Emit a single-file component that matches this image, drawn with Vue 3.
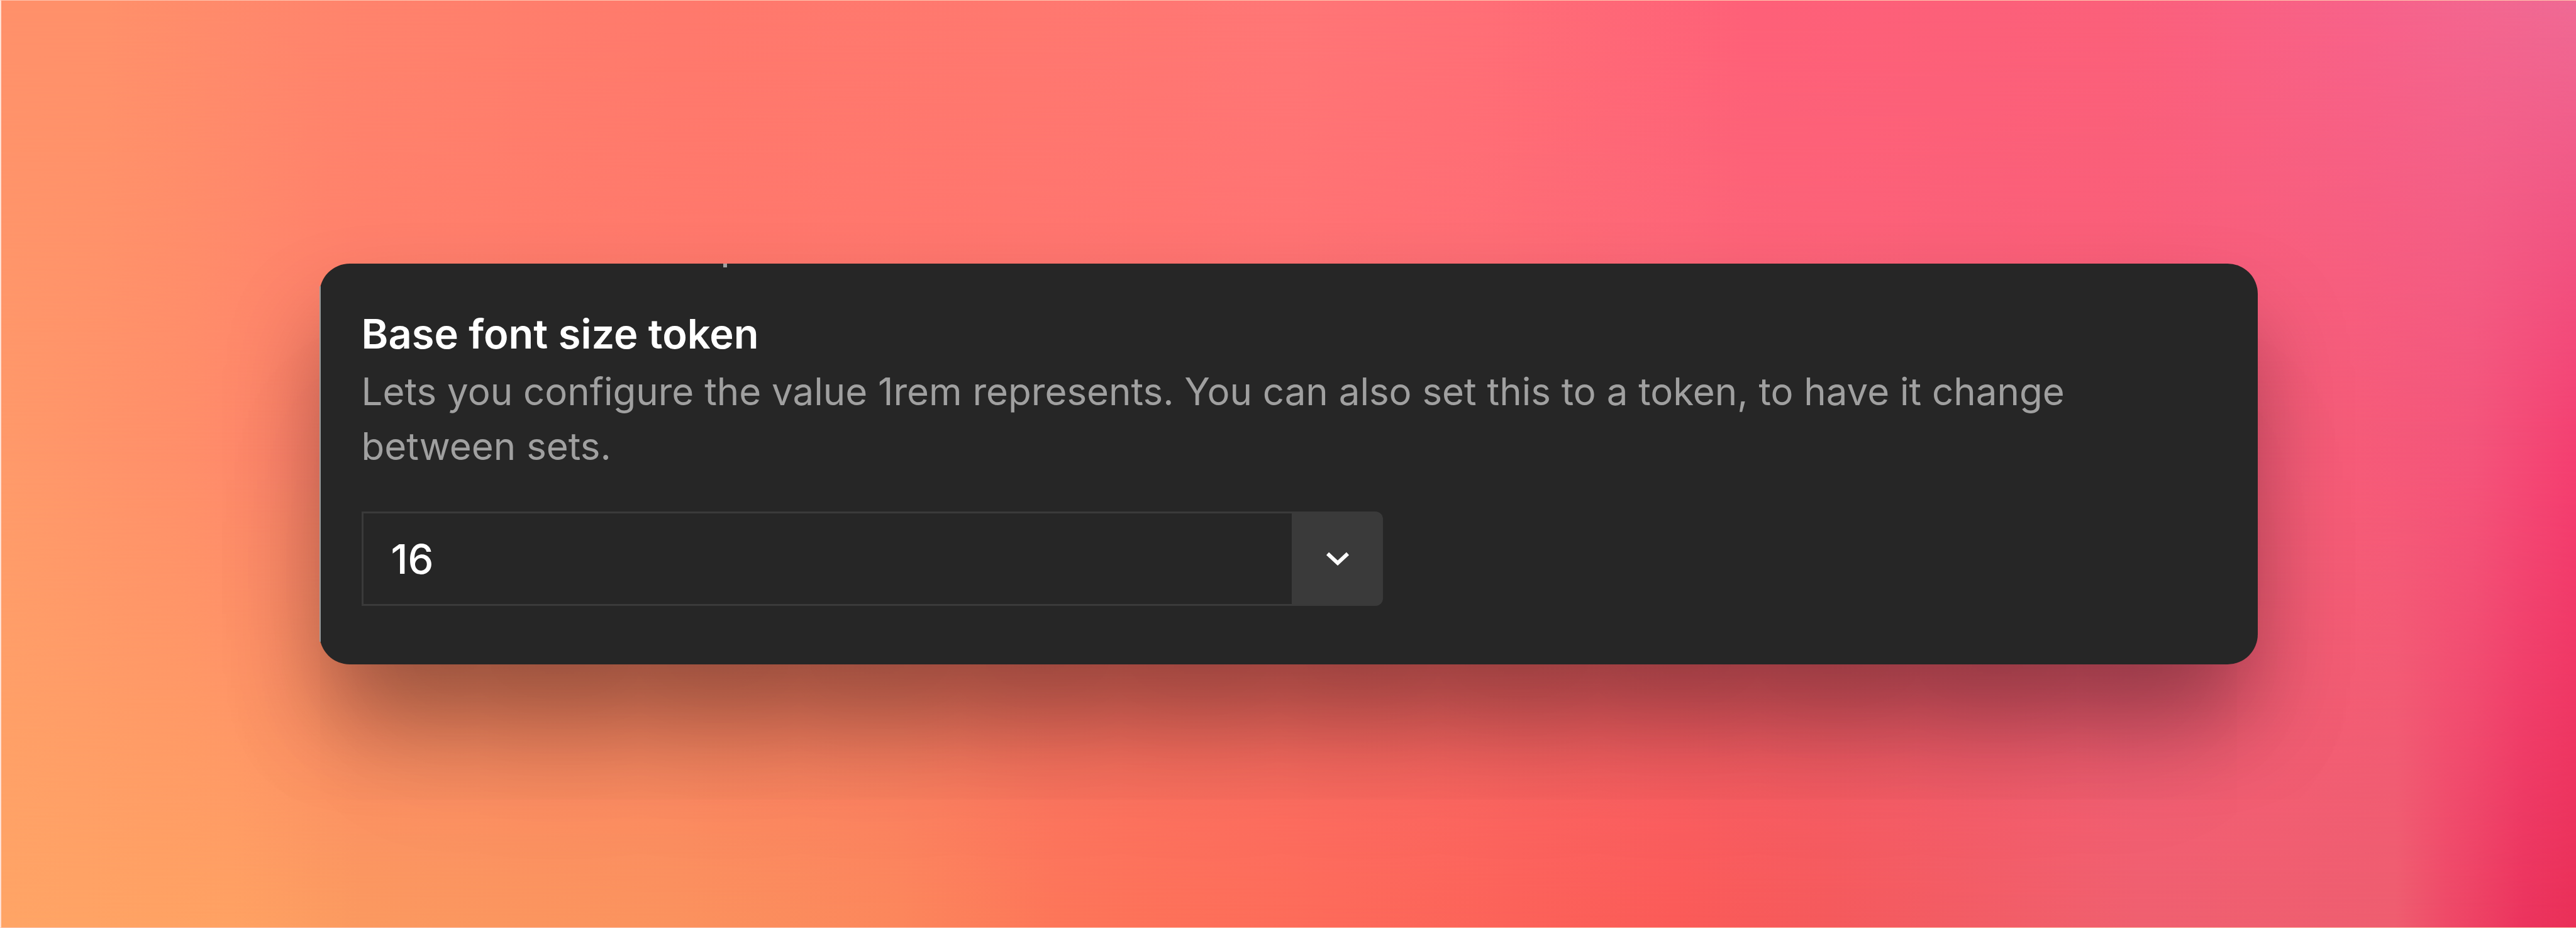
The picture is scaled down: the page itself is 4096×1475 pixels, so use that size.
<script setup>
import { ref } from 'vue'

const baseFontSize = ref('16')
</script>

<template>
  <main class="page">
    <div class="wash wash-bottom"></div>
    <div class="wash wash-middle"></div>
    <div class="wash wash-top"></div>
    <section class="card">
      <label class="title" for="base-font-size">Base font size token</label>
      <p id="base-font-hint" class="hint">
        Lets you configure the value 1rem represents. You can also set this to a token, to have it change between sets.
      </p>
      <div class="field">
        <input id="base-font-size" v-model="baseFontSize" class="value" type="text" aria-describedby="base-font-hint" />
        <button class="toggle" type="button" aria-label="Choose a token">
          <svg class="chevron" viewBox="0 0 40 24" fill="none" aria-hidden="true">
            <path d="M4 4 L20 19 L36 4" stroke="currentColor" stroke-width="6" />
          </svg>
        </button>
      </div>
    </section>
  </main>
</template>

<style>
body {
  margin: 0;
}
</style>

<style scoped>
.page {
  position: relative;
  isolation: isolate;
  box-sizing: border-box;
  min-height: 100vh;
  display: flex;
  align-items: center;
  justify-content: center;
  overflow: hidden;
  border: 1px solid #ffc4ae;
  border-width: 1px 0 1px 2px;
  border-left-color: #ffe0d4;
  font-family: Inter, "Liberation Sans", sans-serif;
}

.wash {
  position: absolute;
  inset: 0;
  z-index: -1;
}

.wash-bottom {
  background: linear-gradient(to right, #ffa566 0%, #ffa263 9%, #fb9a60 14%, #fb935e 26%, #fc875c 35%, #fd7659 41%, #fd6a5a 52%, #fb5b58 65%, #f55a5c 71%, #f06070 83%, #ef5e70 93%, #ef4a68 95%, #ec345e 98%, #ea3058 100%);
}

.wash-middle {
  background: linear-gradient(to right, #ff9a6a 0%, #ff8f6a 7%, #ff7e6b 14%, #ff776c 30%, #ff7070 50%, #fc6878 65%, #f95e78 80%, #f65c78 91%, #f4547a 96%, #f43e70 100%);
  mask-image: linear-gradient(to bottom, #000 50%, transparent 100%);
}

.wash-top {
  background: linear-gradient(to right, #ff906a 0%, #ff906a 4%, #ff856c 12%, #ff796c 26%, #ff786f 40%, #ff7676 50%, #ff6f76 57%, #fe6078 68%, #fb607a 82%, #f7628a 92%, #ef6a94 100%);
  mask-image: linear-gradient(to bottom, #000 0%, transparent 50%);
}

.card {
  position: relative;
  box-sizing: border-box;
  width: 75.3%;
  padding: 64px 67px 93px;
  border-radius: 48px;
  background: #262626;
  box-shadow:
    0 90px 150px -10px rgba(0, 0, 0, 0.34),
    0 180px 240px -60px rgba(0, 0, 0, 0.14);
}

/* light hairline along the left side */
.card::before {
  content: "";
  position: absolute;
  top: 36px;
  bottom: 36px;
  left: 0;
  width: 2px;
  background: #999;
}

/* tail of the row scrolled out above */
.card::after {
  content: "";
  position: absolute;
  top: 0;
  left: 642px;
  width: 6px;
  height: 6px;
  background: #a0a0a0;
}

.title {
  display: block;
  font-size: 65px;
  line-height: 96px;
  font-weight: 600;
  color: #fff;
}

.hint {
  max-width: 95%;
  margin: 0 0 60px;
  font-size: 60px;
  line-height: 87px;
  color: #a0a0a0;
}

.field {
  display: flex;
  width: 55.1%;
  height: 150px;
}

.value {
  box-sizing: border-box;
  flex: 1;
  min-width: 0;
  height: 100%;
  padding: 0 44px;
  border: 3px solid #3a3a3a;
  border-right: 0;
  border-radius: 0;
  background: transparent;
  font: inherit;
  font-size: 65px;
  font-weight: 500;
  color: #fff;
  outline: none;
}

.toggle {
  display: flex;
  align-items: center;
  justify-content: center;
  width: 145px;
  padding: 0;
  border: 0;
  border-radius: 0 12px 12px 0;
  background: #3a3a3a;
  color: #fff;
}

.chevron {
  width: 40px;
  height: 24px;
}
</style>
